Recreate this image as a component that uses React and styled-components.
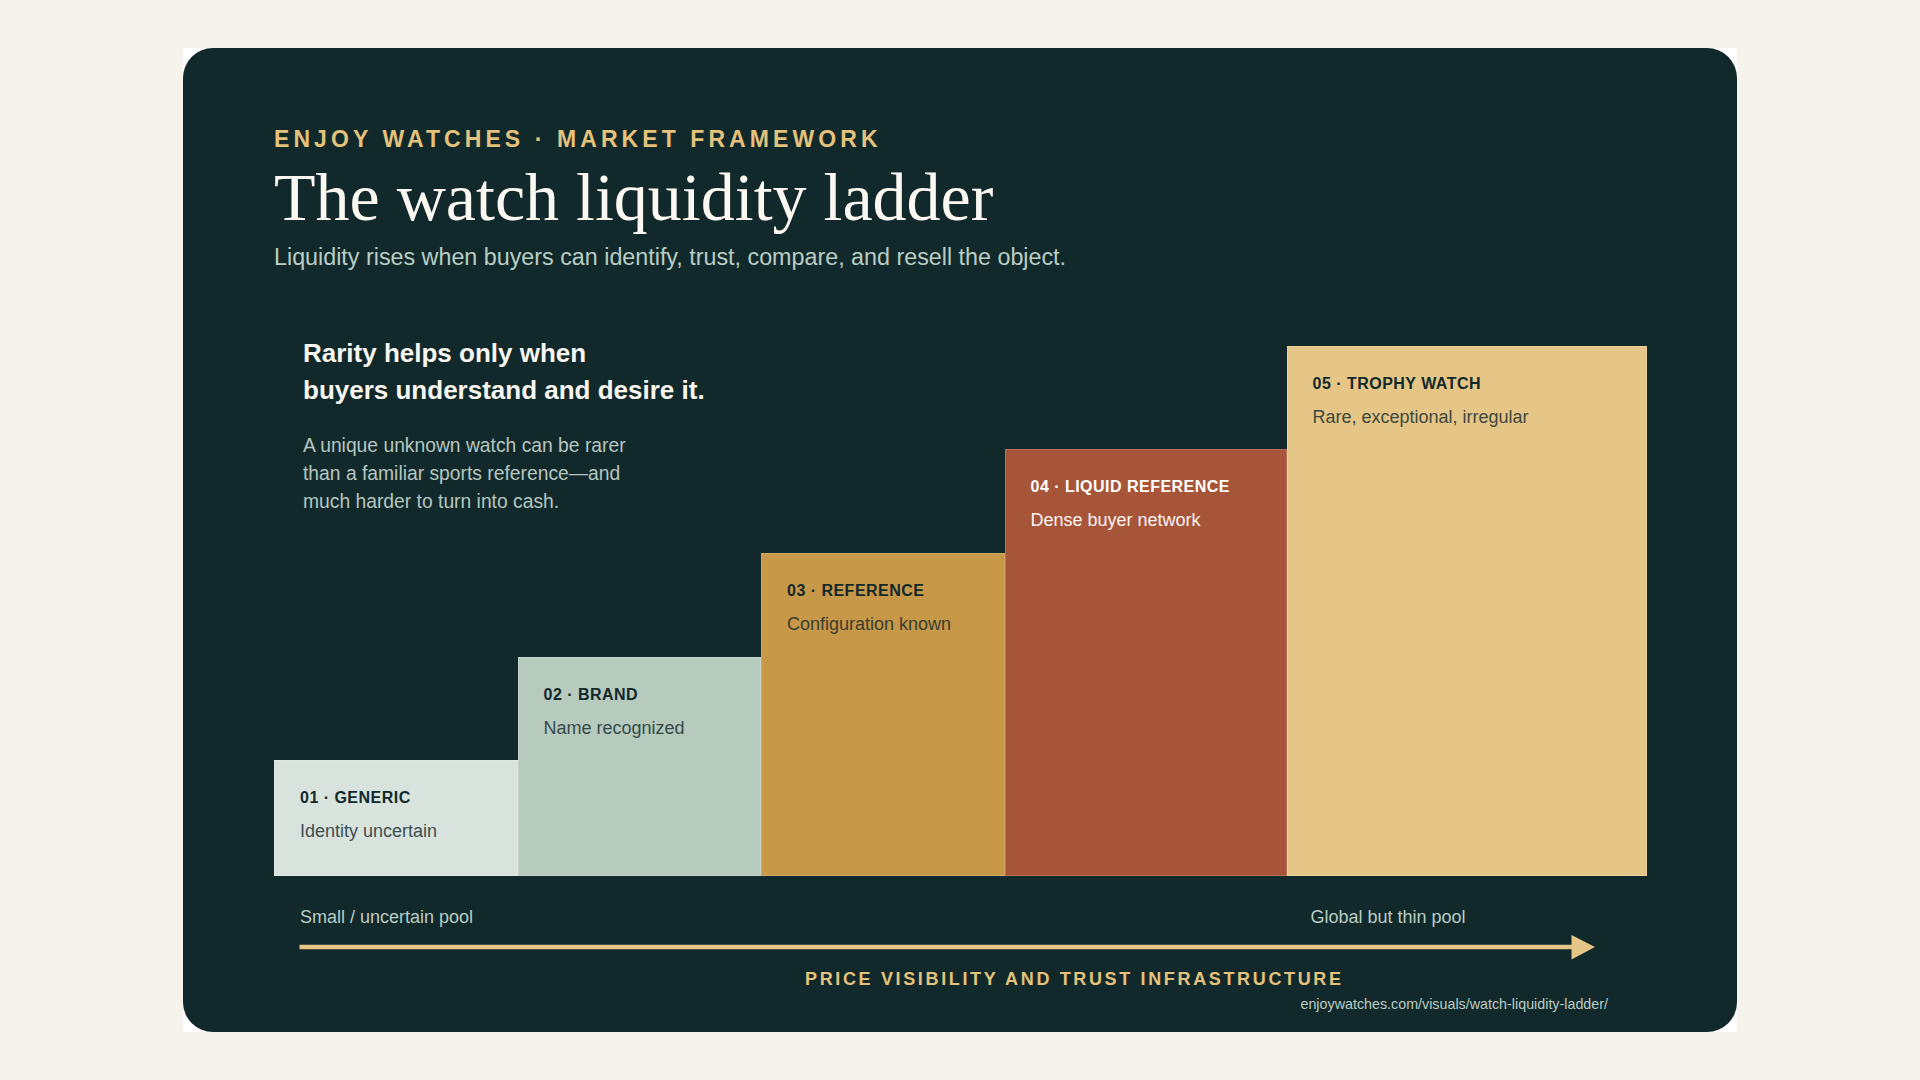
import React from 'react';
import styled, { createGlobalStyle } from 'styled-components';

const GlobalStyle = createGlobalStyle`
  html, body {
    margin: 0;
    padding: 0;
    background: #f6f2ec;
    font-family: "Liberation Sans", Arial, sans-serif;
  }
  * {
    box-sizing: border-box;
  }
`;

const Page = styled.div`
  min-height: 100vh;
  display: flex;
  align-items: center;
  justify-content: center;
`;

const Frame = styled.div`
  width: 1554px;
  background: #ffffff;
`;

const Card = styled.section`
  background: #12292b;
  border-radius: 30px;
  padding: 77.7px 90px 19.2px 91px;
  display: flex;
  flex-direction: column;
`;

const Eyebrow = styled.p`
  margin: 0;
  font-size: 23px;
  line-height: 27.6px;
  font-weight: 700;
  letter-spacing: 4.08px;
  color: #e4c27c;
  text-transform: uppercase;
`;

const Title = styled.h1`
  margin: 7px 0 0;
  font-family: "Liberation Serif", "Times New Roman", serif;
  font-weight: 400;
  font-size: 68px;
  line-height: 74.8px;
  color: #fbf8f1;
`;

const Subtitle = styled.p`
  margin: 6.5px 0 0;
  font-size: 23.3px;
  line-height: 32.2px;
  color: #b9cdc4;
`;

const COLUMNS = '243.5px 243.5px 243.5px 282px 360.5px';

const Chart = styled.div`
  margin-top: 61.9px;
  display: grid;
  grid-template-columns: ${COLUMNS};
  grid-template-rows: 541px;
`;

const Note = styled.div`
  grid-column: 1 / 4;
  grid-row: 1;
  align-self: start;
  padding-left: 29px;
`;

const NoteHeading = styled.h2`
  margin: 0;
  font-size: 26px;
  line-height: 36.4px;
  font-weight: 700;
  color: #f8f6f1;
`;

const NoteText = styled.p`
  margin: 24px 0 0;
  max-width: 345px;
  font-size: 19.3px;
  line-height: 28px;
  color: #b5c6c0;
`;

const Step = styled.div`
  grid-row: 1;
  grid-column: ${({ col }) => col};
  align-self: end;
  height: ${({ h }) => h}px;
  background: ${({ bg }) => bg};
  border: 1px solid rgba(255, 255, 255, 0.16);
  padding: 27px 25px 0;
  color: ${({ light }) => (light ? '#ffffff' : '#12292b')};
`;

const StepLabel = styled.div`
  font-size: 16px;
  line-height: 19px;
  font-weight: 700;
  letter-spacing: 0.03em;
  white-space: nowrap;
`;

const StepText = styled.div`
  margin-top: 13px;
  font-size: 18px;
  line-height: 23.4px;
  white-space: nowrap;
  opacity: ${({ light }) => (light ? 0.94 : 0.8)};
`;

const AxisRow = styled.div`
  margin-top: 30px;
  display: grid;
  grid-template-columns: ${COLUMNS};
`;

const AxisLabel = styled.span`
  grid-column: ${({ col }) => col};
  padding-left: ${({ inset }) => inset}px;
  font-size: 18px;
  line-height: 23.4px;
  color: #b9cdc4;
  white-space: nowrap;
`;

const Arrow = styled.svg`
  display: block;
  margin-top: 4px;
  width: 1373px;
  height: 26px;
`;

const AxisTitle = styled.p`
  margin: 8px 0 0 531px;
  font-size: 18px;
  line-height: 23.4px;
  font-weight: 700;
  letter-spacing: 2.65px;
  color: #e4c27c;
  text-transform: uppercase;
`;

const Source = styled.p`
  margin: 3.5px 0 0;
  padding-right: 39px;
  text-align: right;
  font-size: 14.3px;
  line-height: 18.2px;
  color: #b9cdc4;
`;

const STEPS = [
  { num: '01', name: 'GENERIC', text: 'Identity uncertain', h: 116, bg: '#d9e3de' },
  { num: '02', name: 'BRAND', text: 'Name recognized', h: 219.5, bg: '#b7cabe' },
  { num: '03', name: 'REFERENCE', text: 'Configuration known', h: 323.5, bg: '#c89849' },
  { num: '04', name: 'LIQUID REFERENCE', text: 'Dense buyer network', h: 427, bg: '#a75538', light: true },
  { num: '05', name: 'TROPHY WATCH', text: 'Rare, exceptional, irregular', h: 530.5, bg: '#e5c687' },
];

function LiquidityLadder() {
  return (
    <Card>
      <Eyebrow>Enjoy Watches · Market Framework</Eyebrow>
      <Title>The watch liquidity ladder</Title>
      <Subtitle>Liquidity rises when buyers can identify, trust, compare, and resell the object.</Subtitle>

      <Chart>
        <Note>
          <NoteHeading>
            Rarity helps only when
            <br />
            buyers understand and desire it.
          </NoteHeading>
          <NoteText>
            A unique unknown watch can be rarer than a familiar sports reference—and much harder to turn into cash.
          </NoteText>
        </Note>
        {STEPS.map((s, i) => (
          <Step key={s.num} col={i + 1} h={s.h} bg={s.bg} light={s.light}>
            <StepLabel>
              {s.num} · {s.name}
            </StepLabel>
            <StepText light={s.light}>{s.text}</StepText>
          </Step>
        ))}
      </Chart>

      <AxisRow>
        <AxisLabel col={1} inset={26}>
          Small / uncertain pool
        </AxisLabel>
        <AxisLabel col={5} inset={24}>
          Global but thin pool
        </AxisLabel>
      </AxisRow>
      <Arrow viewBox="0 0 1373 26">
        <line x1="25.5" y1="13" x2="1299" y2="13" stroke="#e5c687" strokeWidth="4.5" />
        <polygon points="1297.5,1 1321,13 1297.5,25.5" fill="#e5c687" />
      </Arrow>
      <AxisTitle>Price visibility and trust infrastructure</AxisTitle>
      <Source>enjoywatches.com/visuals/watch-liquidity-ladder/</Source>
    </Card>
  );
}

export default function App() {
  return (
    <>
      <GlobalStyle />
      <Page>
        <Frame>
          <LiquidityLadder />
        </Frame>
      </Page>
    </>
  );
}
